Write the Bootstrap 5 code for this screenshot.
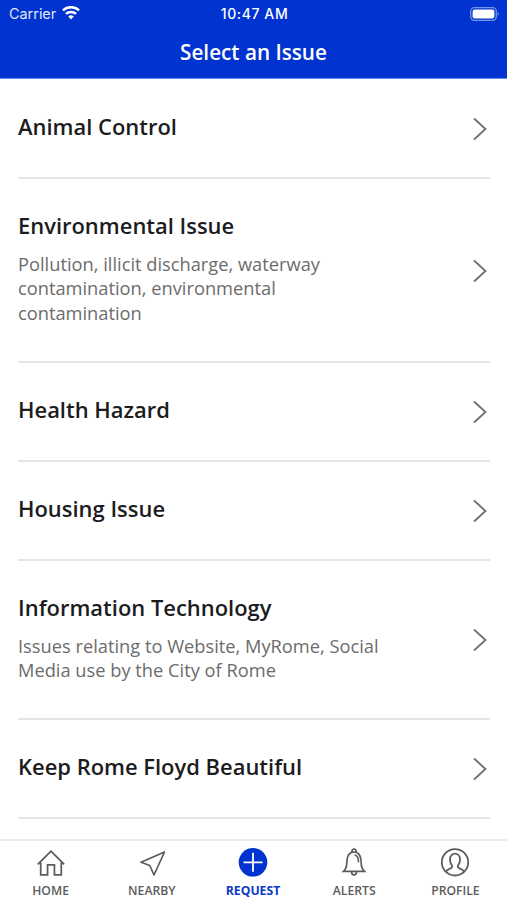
<!DOCTYPE html>
<html lang="en">
<head>
<meta charset="utf-8">
<meta name="viewport" content="width=device-width, initial-scale=1">
<title>Select an Issue</title>
<link href="https://cdn.jsdelivr.net/npm/bootstrap@5.3.0/dist/css/bootstrap.min.css" rel="stylesheet">
<style>
  body { font-family: "Open Sans", sans-serif; height: 900px; color: #1c1c1e; }
  .app-header { background: #0033cf; height: 79px; border-bottom: 1px solid #5f8df0; }
  .status-bar { height: 28px; padding: 0 7px 0 9px; font: 14px/28px Inter, sans-serif; }
  .status-side { flex: 1 1 0; }
  .carrier { opacity: .88; font-size: 14.4px; }
  .wifi { margin-left: 6px; margin-bottom: 2px; }
  .battery { margin-bottom: 1px; }
  .clock { font-weight: 500; font-size: 14px; letter-spacing: .6px; }
  .screen-title { font-size: 20.7px; line-height: 28px; font-weight: 600; margin-top: 10px; }
  .issue-list { padding: 1px 17px 0 18px; }
  .issue { padding: 31px 0 34px; border-bottom: 2px solid #e5e5e5; color: inherit; }
  .issue-name { font-size: 21.95px; line-height: 32px; font-weight: 600; }
  .issue-note { font-size: 18.27px; line-height: 24.8px; color: #6c6c6c; margin-top: 9.7px; margin-bottom: .8px; width: 380px; }
  .issue-note.narrow { width: 330px; }
  .chevron { margin-right: 2px; margin-top: 4.4px; }
  .tab-bar { height: 61px; border-top: 2px solid #ececec; padding: 7px 1px 0 0; }
  .tab { flex: 1 1 0; color: #5c5c5c; font-size: 12.2px; line-height: 16px; font-weight: 600; }
  .tab svg { margin-bottom: 5px; }
  .tab.current { color: #0a3bc8; font-weight: 700; }
</style>
<script src="https://cdn.jsdelivr.net/npm/bootstrap@5.3.0/dist/js/bootstrap.bundle.min.js"></script>
</head>
<body class="d-flex flex-column overflow-hidden bg-white">
<svg class="d-none">
  <symbol id="chev" viewBox="0 0 16 24"><path d="M2 1.500 13.500 12 2 22.500" fill="none" stroke="#707070" stroke-width="1.800"/></symbol>
</svg>
<header class="app-header text-white flex-shrink-0">
  <div class="status-bar d-flex align-items-center">
    <div class="status-side d-flex align-items-center">
      <span class="carrier">Carrier</span>
      <svg class="wifi" width="18" height="14" viewBox="0 0 18 14" fill="none" stroke="#fff" stroke-width="2.500"><path d="M.9 4.400a11.800 11.800 0 0 1 16.200 0"/><path d="M3.900 7.900a7.500 7.500 0 0 1 10.200 0"/><path d="M9 13.500 6.200 10.600a4 4 0 0 1 5.600 0z" fill="#fff" stroke="none"/></svg>
    </div>
    <span class="clock">10:47 AM</span>
    <div class="status-side d-flex align-items-center justify-content-end">
      <svg class="battery" width="30" height="14" viewBox="0 0 30 14"><rect x=".7" y=".7" width="25.600" height="12.600" rx="3.800" fill="none" stroke="#7796e7" stroke-width="1.300"/><rect x="2.600" y="2.600" width="21.800" height="8.800" rx="1.800" fill="#fff"/><path d="M27.700 4.800q2.200 2.200 0 4.400z" fill="#7796e7"/></svg>
    </div>
  </div>
  <h1 class="screen-title text-center mb-0">Select an Issue</h1>
</header>
<main class="issue-list flex-grow-1 overflow-hidden">
  <a class="issue d-flex justify-content-between align-items-center text-decoration-none" href="#"><div><div class="issue-name">Animal Control</div></div><svg class="chevron" width="16" height="24"><use href="#chev"/></svg></a>
  <a class="issue d-flex justify-content-between align-items-center text-decoration-none" href="#"><div><div class="issue-name">Environmental Issue</div><div class="issue-note narrow">Pollution, illicit discharge, waterway contamination, environmental contamination</div></div><svg class="chevron" width="16" height="24"><use href="#chev"/></svg></a>
  <a class="issue d-flex justify-content-between align-items-center text-decoration-none" href="#"><div><div class="issue-name">Health Hazard</div></div><svg class="chevron" width="16" height="24"><use href="#chev"/></svg></a>
  <a class="issue d-flex justify-content-between align-items-center text-decoration-none" href="#"><div><div class="issue-name">Housing Issue</div></div><svg class="chevron" width="16" height="24"><use href="#chev"/></svg></a>
  <a class="issue d-flex justify-content-between align-items-center text-decoration-none" href="#"><div><div class="issue-name">Information Technology</div><div class="issue-note">Issues relating to Website, MyRome, Social Media use by the City of Rome</div></div><svg class="chevron" width="16" height="24"><use href="#chev"/></svg></a>
  <a class="issue d-flex justify-content-between align-items-center text-decoration-none" href="#"><div><div class="issue-name">Keep Rome Floyd Beautiful</div></div><svg class="chevron" width="16" height="24"><use href="#chev"/></svg></a>
</main>
<nav class="tab-bar d-flex flex-shrink-0 bg-white">
  <a class="tab d-flex flex-column align-items-center text-decoration-none" href="#">
    <svg width="30" height="30" viewBox="0 0 30 30" fill="none" stroke="currentColor" stroke-width="1.800"><path d="M1.500 16.500 15 3 28.500 16.500M4.500 14.500V27h7V17h7v10h7V14.500" transform="translate(.3 .3) scale(.98)"/></svg>HOME</a>
  <a class="tab d-flex flex-column align-items-center text-decoration-none" href="#">
    <svg width="30" height="30" viewBox="0 0 30 30" fill="none" stroke="currentColor" stroke-width="1.700" stroke-linejoin="round"><path d="M27.500 4 4 14.300 12.800 17.500 17 27z"/></svg>NEARBY</a>
  <a class="tab current d-flex flex-column align-items-center text-decoration-none" href="#" aria-current="page">
    <svg width="30" height="30" viewBox="0 0 30 30"><circle cx="15" cy="14.300" r="14.300" fill="#0033cf"/><path d="M15 4.800v19M5.500 14.300h19" stroke="#fff" stroke-width="1.800"/></svg>REQUEST</a>
  <a class="tab d-flex flex-column align-items-center text-decoration-none" href="#">
    <svg width="30" height="30" viewBox="0 0 30 30" fill="none" stroke="currentColor" stroke-width="1.700"><path d="M4.500 23.300h21c-2.500-2.300-3.300-4.300-3.300-8.300 0-6-1.700-11-7.200-11S7.800 9 7.800 15c0 4-.8 6-3.300 8.300zM12.800 4c0-4 4.400-4 4.400 0M12.500 23.500c0 4.500 5 4.500 5 0M15.500 7c3 .3 4 3 4 7.300"/></svg>ALERTS</a>
  <a class="tab d-flex flex-column align-items-center text-decoration-none" href="#">
    <svg width="30" height="30" viewBox="0 0 30 30" fill="none" stroke="currentColor" stroke-width="1.800"><circle cx="15" cy="14.300" r="13.200"/><path d="M6 23.800c.8-2.300 3.300-2.800 5.200-3.800 1.100-.6 1.300-1.700.6-2.800-1.100-1.400-1.800-3.300-1.800-5.800 0-7.600 10-7.600 10 0 0 2.500-.7 4.400-1.800 5.800-.7 1.100-.5 2.200.6 2.800 1.900 1 4.400 1.500 5.200 3.800"/></svg>PROFILE</a>
</nav>
</body>
</html>
